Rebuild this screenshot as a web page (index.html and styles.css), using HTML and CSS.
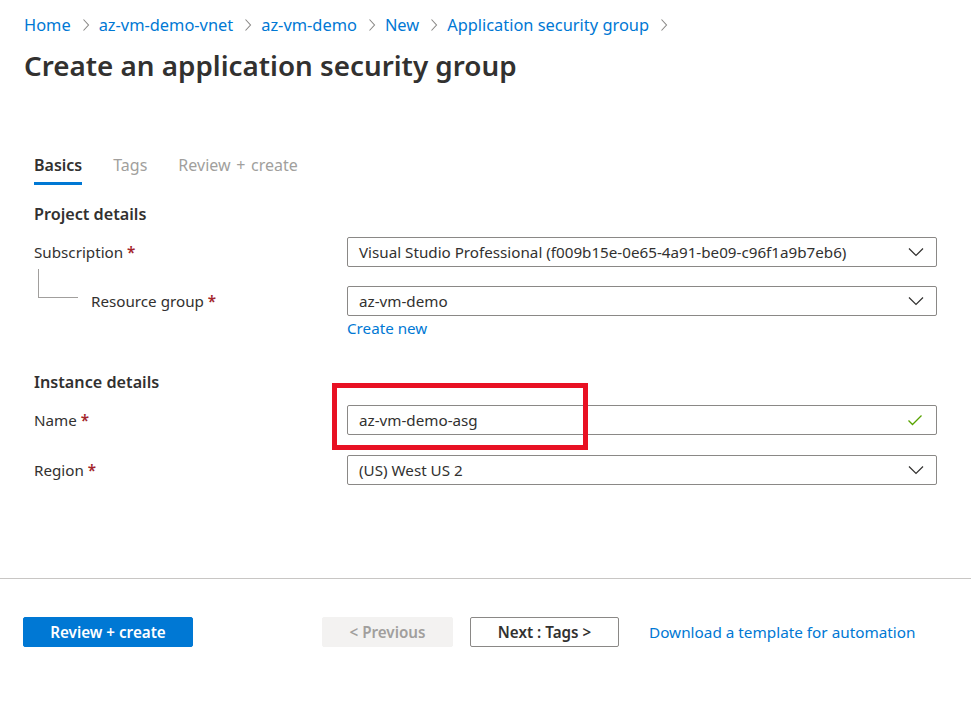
FILE: index.html
```html
<!DOCTYPE html>
<html lang="en">
<head>
<meta charset="utf-8">
<title>Create an application security group</title>
<link rel="stylesheet" href="styles.css">
</head>
<body>
<div class="page">
  <nav class="breadcrumb">
    <a class="crumb">Home</a>
    <svg class="sep" viewBox="0 0 8 14" width="8" height="14"><path d="M1.5 1.5 L6.5 7 L1.5 12.5" fill="none" stroke="#8a8886" stroke-width="1.1"/></svg>
    <a class="crumb">az-vm-demo-vnet</a>
    <svg class="sep" viewBox="0 0 8 14" width="8" height="14"><path d="M1.5 1.5 L6.5 7 L1.5 12.5" fill="none" stroke="#8a8886" stroke-width="1.1"/></svg>
    <a class="crumb">az-vm-demo</a>
    <svg class="sep" viewBox="0 0 8 14" width="8" height="14"><path d="M1.5 1.5 L6.5 7 L1.5 12.5" fill="none" stroke="#8a8886" stroke-width="1.1"/></svg>
    <a class="crumb">New</a>
    <svg class="sep" viewBox="0 0 8 14" width="8" height="14"><path d="M1.5 1.5 L6.5 7 L1.5 12.5" fill="none" stroke="#8a8886" stroke-width="1.1"/></svg>
    <a class="crumb">Application security group</a>
    <svg class="sep" viewBox="0 0 8 14" width="8" height="14"><path d="M1.5 1.5 L6.5 7 L1.5 12.5" fill="none" stroke="#8a8886" stroke-width="1.1"/></svg>
  </nav>
  <h1 class="title">Create an application security group</h1>
</div>

<div class="form">
  <div class="tabs">
    <div class="tab active">Basics</div>
    <div class="tab">Tags</div>
    <div class="tab">Review + create</div>
  </div>

  <h2 class="section">Project details</h2>
  <div class="row">
    <div class="label">Subscription <span class="req">*</span></div>
    <div class="control select">
      <span class="value">Visual Studio Professional (f009b15e-0e65-4a91-be09-c96f1a9b7eb6)</span>
      <svg class="chev" viewBox="0 0 16 10" width="16" height="10"><path d="M1 1.5 L8 8.5 L15 1.5" fill="none" stroke="#323130" stroke-width="1.2"/></svg>
    </div>
  </div>
  <div class="row row-rg">
    <div class="label label-rg"><span class="tree"></span><span class="rg-text">Resource group <span class="req">*</span></span></div>
    <div class="control-col">
      <div class="control select">
        <span class="value">az-vm-demo</span>
        <svg class="chev" viewBox="0 0 16 10" width="16" height="10"><path d="M1 1.5 L8 8.5 L15 1.5" fill="none" stroke="#323130" stroke-width="1.2"/></svg>
      </div>
      <a class="link create-new">Create new</a>
    </div>
  </div>

  <h2 class="section section-instance">Instance details</h2>
  <div class="row">
    <div class="label">Name <span class="req">*</span></div>
    <div class="control input">
      <span class="value">az-vm-demo-asg</span>
      <svg class="check" viewBox="0 0 16 12" width="16" height="12"><path d="M1.5 6.5 L5.5 10.5 L14.5 1.5" fill="none" stroke="#57a300" stroke-width="1.3"/></svg>
      <div class="highlight"></div>
    </div>
  </div>
  <div class="row row-region">
    <div class="label">Region <span class="req">*</span></div>
    <div class="control select">
      <span class="value">(US) West US 2</span>
      <svg class="chev" viewBox="0 0 16 10" width="16" height="10"><path d="M1 1.5 L8 8.5 L15 1.5" fill="none" stroke="#323130" stroke-width="1.2"/></svg>
    </div>
  </div>
</div>

<div class="footer">
  <button class="btn primary">Review + create</button>
  <button class="btn disabled">&lt; Previous</button>
  <button class="btn secondary">Next : Tags &gt;</button>
  <a class="link download">Download a template for automation</a>
</div>
</body>
</html>
```

FILE: styles.css
```css
* { box-sizing: border-box; }
html, body { margin: 0; padding: 0; background: #ffffff; }
body {
  font-family: "Noto Sans", "Open Sans", sans-serif;
  color: #323130;
  width: 971px;
  height: 704px;
  overflow: hidden;
}
.page { padding: 15px 0 0 24px; }
.breadcrumb {
  display: flex;
  align-items: center;
  height: 20px;
  font-size: 16.4px;
  line-height: 20px;
}
.crumb { color: #0078d4; text-decoration: none; }
.sep { margin: 0 9px 0 11px; }
.title {
  margin: 12px 0 0 0;
  font-size: 27.8px;
  line-height: 36px;
  font-weight: 600;
  color: #323130;
}
.form { padding: 71px 0 0 34px; }
.tabs { display: flex; gap: 31px; height: 31px; }
.tab {
  font-size: 16px;
  line-height: 22px;
  color: #a19f9d;
  height: 31px;
  padding-bottom: 7px;
  word-spacing: 1.5px;
}
.tab.active {
  color: #323130;
  font-weight: 600;
  border-bottom: 3px solid #0078d4;
}
.section {
  margin: 18px 0 0 0;
  font-size: 16.2px;
  line-height: 22px;
  font-weight: 600;
  color: #323130;
}
.section-instance { margin-top: 33px; }
.row {
  display: flex;
  margin-top: 12px;
  font-size: 15.2px;
}
.row-rg { margin-top: 19px; }
.row-region { margin-top: 20px; }
.label {
  width: 313px;
  flex: none;
  line-height: 30px;
  color: #323130;
}
.req { color: #a4262c; font-weight: 600; }
.label-rg { display: flex; align-items: flex-start; }
.tree {
  display: block;
  width: 40px;
  height: 29px;
  margin: -17px 13px 0 4px;
  border-left: 1px solid #a19f9d;
  border-bottom: 1px solid #a19f9d;
}
.control-col { display: flex; flex-direction: column; }
.control {
  position: relative;
  width: 590px;
  height: 30px;
  border: 1px solid #8a8886;
  border-radius: 2px;
  display: flex;
  align-items: center;
  justify-content: space-between;
  padding: 0 11px;
  color: #323130;
}
.value { line-height: 28px; }
.chev { margin-right: 1px; }
.check { margin-right: 2px; }
.link { color: #0078d4; text-decoration: none; }
.create-new { display: block; line-height: 20px; margin-top: 2px; font-size: 15.2px; }
.highlight {
  position: absolute;
  left: -16px;
  top: -23px;
  width: 256px;
  height: 67px;
  border: 5px solid #e81123;
}
.footer {
  margin-top: 93px;
  border-top: 1px solid #c8c6c4;
  padding: 38px 0 0 23px;
  display: flex;
  align-items: center;
}
.btn {
  height: 30px;
  border-radius: 2px;
  font-family: inherit;
  font-size: 15.2px;
  font-weight: 600;
  padding: 0;
  cursor: pointer;
}
.primary {
  width: 170px;
  background: #0078d4;
  border: 1px solid #0078d4;
  color: #ffffff;
}
.disabled {
  width: 131px;
  margin-left: 129px;
  background: #f3f2f1;
  border: 1px solid #f3f2f1;
  color: #a19f9d;
}
.secondary {
  width: 149px;
  margin-left: 17px;
  background: #ffffff;
  border: 1px solid #8a8886;
  color: #323130;
}
.download { margin-left: 30px; font-size: 15.3px; }
```
